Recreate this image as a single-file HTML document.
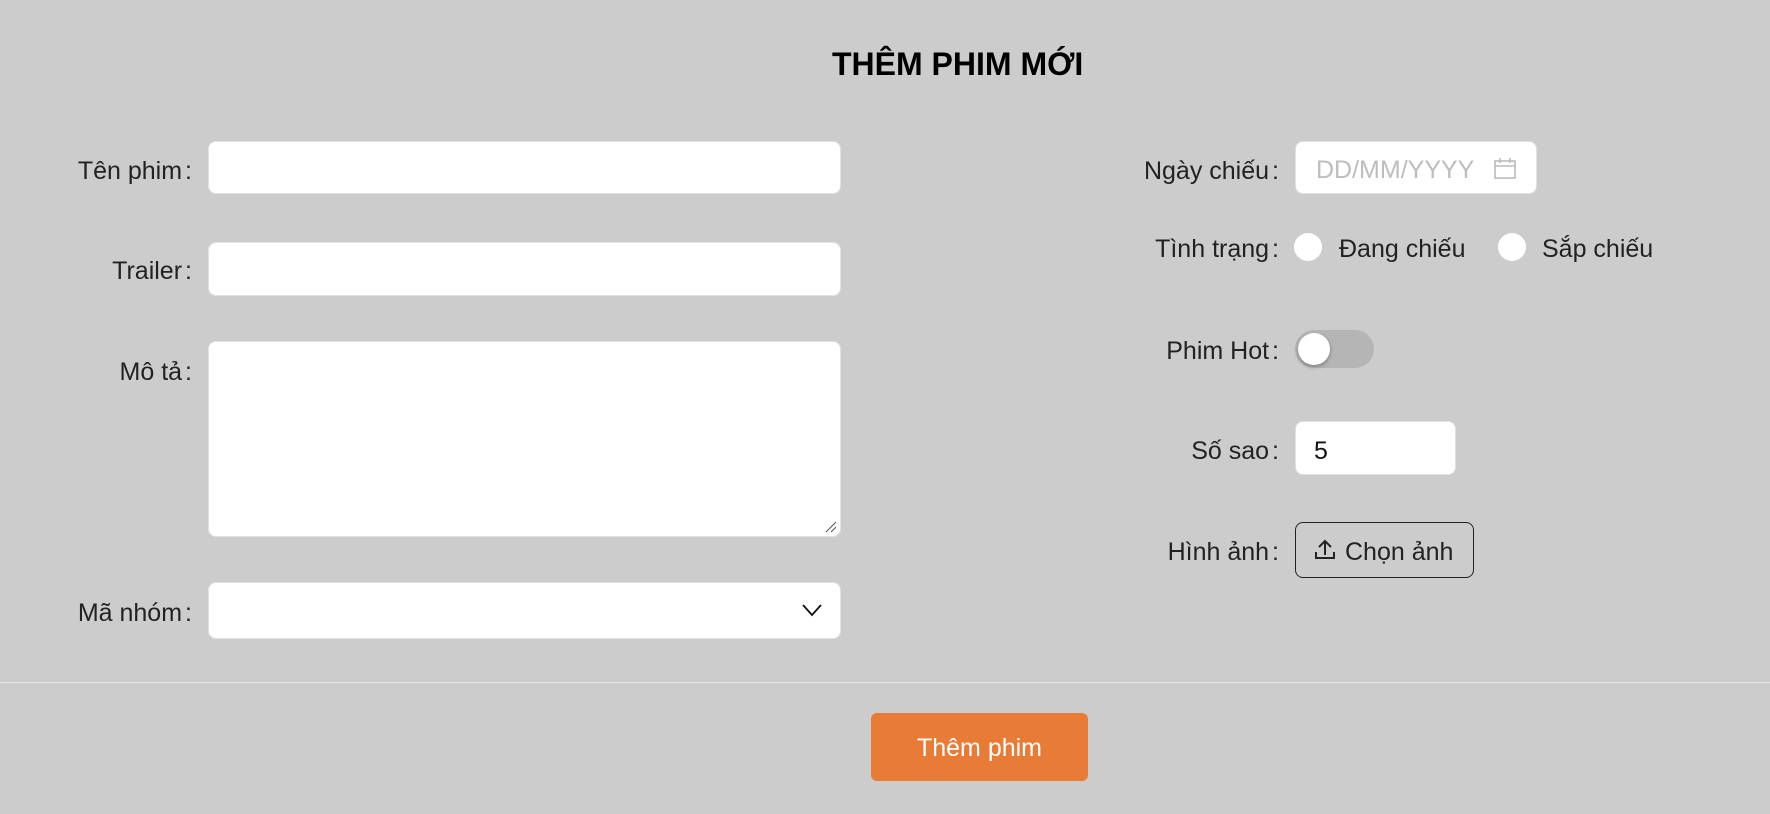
<!DOCTYPE html>
<html><head><meta charset="utf-8"><style>
*{box-sizing:border-box;margin:0;padding:0}
body{width:1770px;height:814px;background:#cccccc;font-family:"Liberation Sans",sans-serif;position:relative;overflow:hidden;color:#222}
.a{position:absolute}
.t{font-weight:bold;font-size:32px;left:832px;top:46px;color:#000;white-space:nowrap}
.lbl{position:absolute;font-size:25px;white-space:nowrap;text-align:right;line-height:30px}
.lbl.l{right:1578px}
.lbl.r{right:491px}
.lbl i{font-style:normal;margin-left:3px}
.box{position:absolute;background:#fff;border:1px solid #e2e2e2;border-radius:8px}
.radio{position:absolute;width:28px;height:28px;border-radius:50%;background:#fff}
.txt{position:absolute;font-size:25px;line-height:30px;white-space:nowrap}
</style></head><body>
<div class="a t">THÊM PHIM MỚI</div>

<div class="lbl l" style="top:156px">Tên phim<i>:</i></div>
<div class="box" style="left:208px;top:141px;width:633px;height:53px"></div>
<div class="lbl l" style="top:256px">Trailer<i>:</i></div>
<div class="box" style="left:208px;top:242px;width:633px;height:54px"></div>
<div class="lbl l" style="top:357px">Mô tả<i>:</i></div>
<div class="box" style="left:208px;top:341px;width:633px;height:196px">
<svg class="a" style="right:3px;bottom:3px" width="12" height="12"><path d="M1 11L11 1M6 11L11 6" stroke="#555" stroke-width="1"/></svg></div>
<div class="lbl l" style="top:598px">Mã nhóm<i>:</i></div>
<div class="box" style="left:208px;top:582px;width:633px;height:57px">
<svg class="a" style="left:593px;top:21px" width="20" height="13"><path d="M1 1L10 11L19 1" stroke="#111" stroke-width="1.8" fill="none"/></svg></div>

<div class="lbl r" style="top:156px">Ngày chiếu<i>:</i></div>
<div class="box" style="left:1295px;top:141px;width:242px;height:53px">
<span class="txt" style="left:20px;top:13px;color:#bdbdbd">DD/MM/YYYY</span>
<svg class="a" style="left:197px;top:15px" width="24" height="24"><rect x="2" y="4" width="20" height="17" fill="none" stroke="#bbb" stroke-width="1.6"/><path d="M2 9H22M7 1V6M17 1V6" stroke="#bbb" stroke-width="1.6"/></svg></div>

<div class="lbl r" style="top:234px">Tình trạng<i>:</i></div>
<div class="radio" style="left:1294px;top:233px"></div>
<div class="txt" style="left:1339px;top:234px">Đang chiếu</div>
<div class="radio" style="left:1498px;top:233px"></div>
<div class="txt" style="left:1542px;top:234px">Sắp chiếu</div>

<div class="lbl r" style="top:336px">Phim Hot<i>:</i></div>
<div class="a" style="left:1295px;top:330px;width:79px;height:38px;border-radius:19px;background:#b5b5b5"></div>
<div class="a" style="left:1298px;top:333px;width:32px;height:32px;border-radius:50%;background:#fff;box-shadow:0 2px 4px rgba(0,0,0,.3)"></div>

<div class="lbl r" style="top:436px">Số sao<i>:</i></div>
<div class="box" style="left:1295px;top:421px;width:161px;height:54px">
<span class="txt" style="left:18px;top:14px;color:#111">5</span></div>

<div class="lbl r" style="top:537px">Hình ảnh<i>:</i></div>
<div class="a" style="left:1295px;top:522px;width:179px;height:56px;border:1.5px solid #222;border-radius:8px">
<svg class="a" style="left:18px;top:15px" width="22" height="22"><path d="M11 17V3M5 9L11 3L17 9M2 14V20H20V14" stroke="#222" stroke-width="2" fill="none"/></svg>
<span class="txt" style="left:49px;top:14px;color:#222">Chọn ảnh</span></div>

<div class="a" style="left:0;top:682px;width:1770px;height:1px;background:#e6e6e6"></div>
<div class="a" style="left:871px;top:713px;width:217px;height:68px;background:#e87b36;border-radius:6px;color:#fff;font-size:25px;text-align:center;line-height:70px">Thêm phim</div>
</body></html>
